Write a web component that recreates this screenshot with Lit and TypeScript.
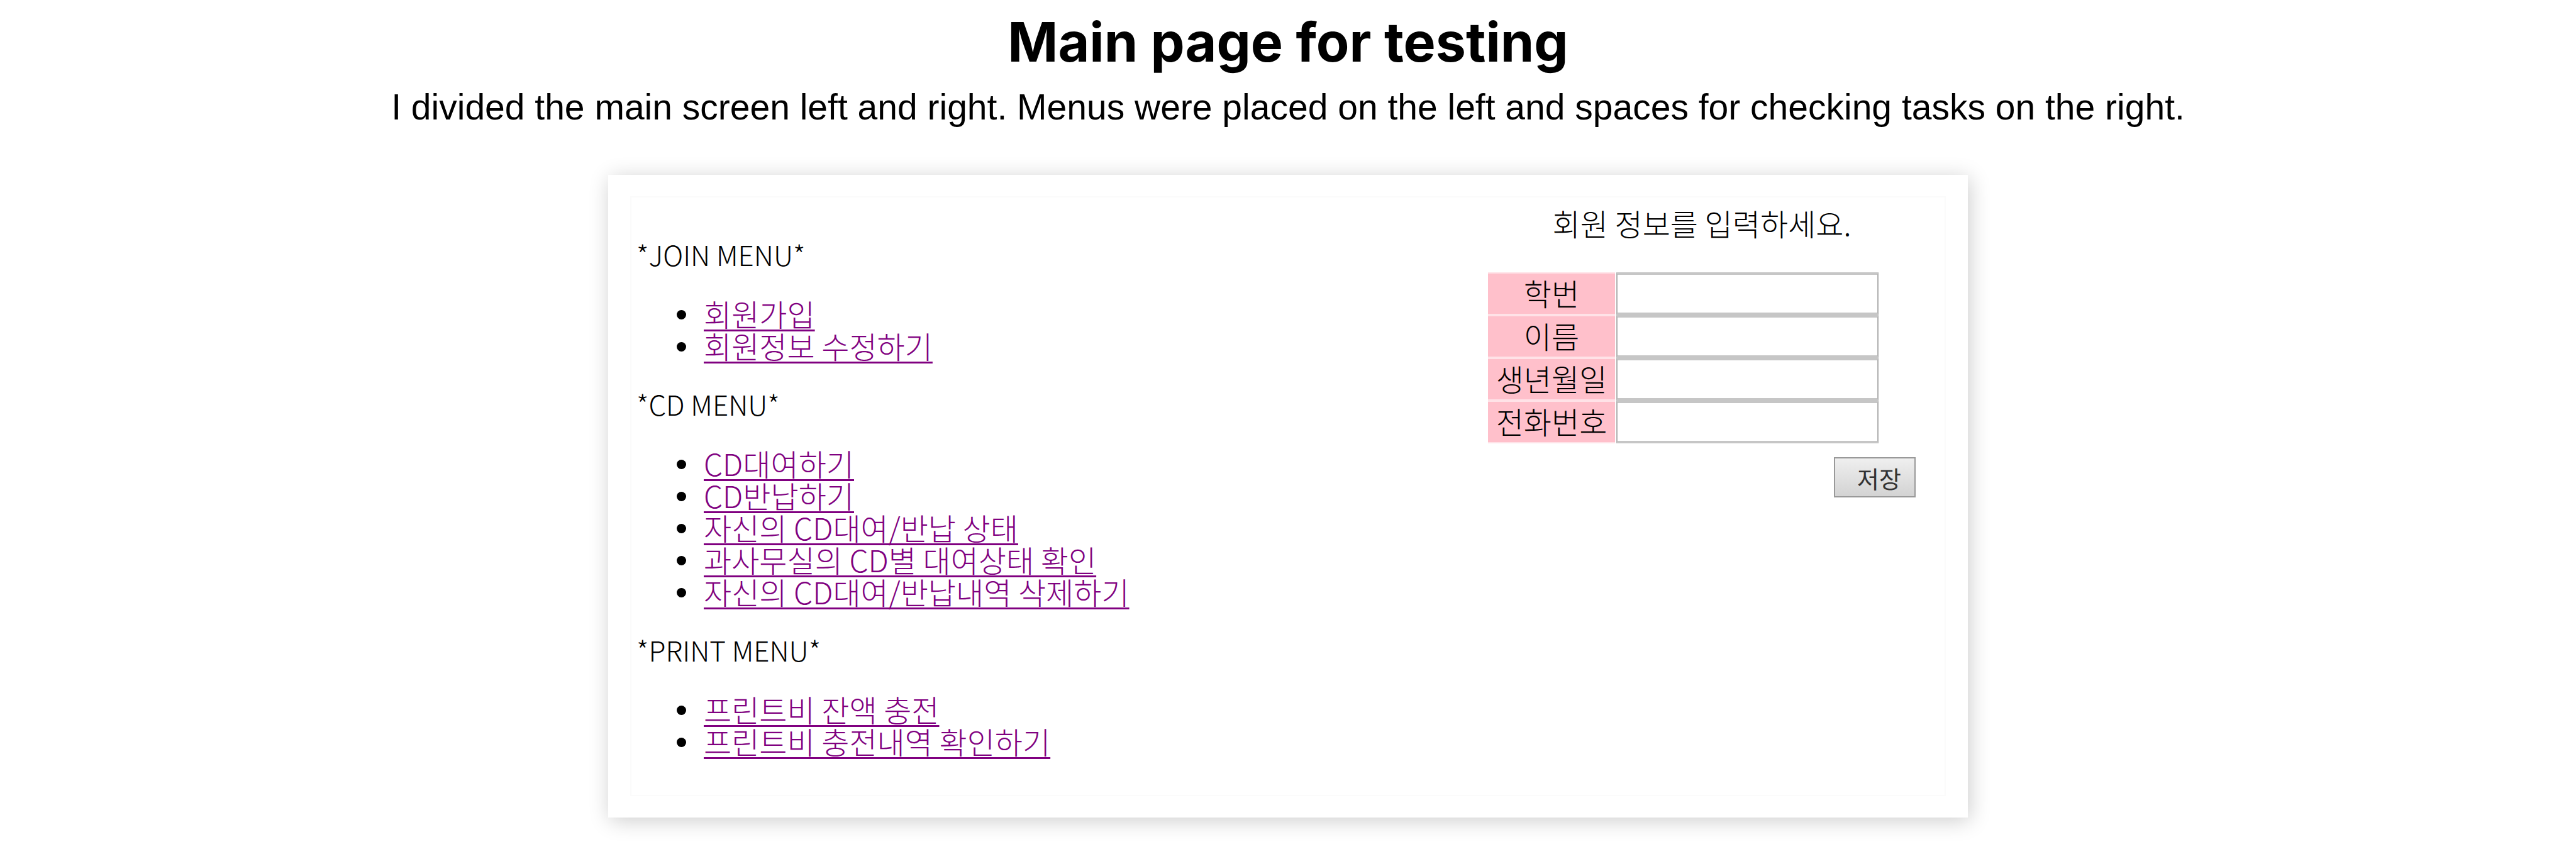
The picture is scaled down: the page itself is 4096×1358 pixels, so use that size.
import { LitElement, html, css } from "lit";
import { customElement } from "lit/decorators.js";

interface MenuGroup {
  title: string;
  items: string[];
}

const MENUS: MenuGroup[] = [
  { title: "*JOIN MENU*", items: ["회원가입", "회원정보 수정하기"] },
  {
    title: "*CD MENU*",
    items: [
      "CD대여하기",
      "CD반납하기",
      "자신의 CD대여/반납 상태",
      "과사무실의 CD별 대여상태 확인",
      "자신의 CD대여/반납내역 삭제하기",
    ],
  },
  { title: "*PRINT MENU*", items: ["프린트비 잔액 충전", "프린트비 충전내역 확인하기"] },
];

const FIELDS = [
  { id: "student-no", label: "학번" },
  { id: "name", label: "이름" },
  { id: "birth", label: "생년월일" },
  { id: "phone", label: "전화번호" },
];

@customElement("side-menu")
class SideMenu extends LitElement {
  static styles = css`
    :host {
      display: block;
    }
    .title {
      margin: 0 0 43px;
      font-size: 44px;
      line-height: 51px;
      font-weight: 300;
    }
    .list {
      margin: 0 0 42px;
      padding: 0 0 0 64px;
      list-style: none;
    }
    .list:last-child {
      margin-bottom: 0;
    }
    .item {
      display: flex;
      align-items: center;
      gap: 28px;
      line-height: 51px;
    }
    .item::before {
      content: "";
      width: 15px;
      height: 15px;
      margin-top: 4px;
      border-radius: 50%;
      background: #000;
    }
    .link {
      color: #800080;
      text-decoration: underline;
      text-decoration-thickness: 3px;
      text-decoration-skip-ink: none;
      text-underline-offset: 5px;
    }
  `;

  render() {
    return html`<nav>
      ${MENUS.map(
        (m) => html`
          <h2 class="title">${m.title}</h2>
          <ul class="list">
            ${m.items.map((t) => html`<li class="item"><a class="link" href="#">${t}</a></li>`)}
          </ul>
        `
      )}
    </nav>`;
  }
}

@customElement("member-form")
class MemberForm extends LitElement {
  static styles = css`
    :host {
      display: block;
    }
    .form {
      display: flex;
      flex-direction: column;
    }
    .heading {
      margin: 0 0 53px;
      text-align: center;
      line-height: 51px;
    }
    .fields {
      display: flex;
      flex-direction: column;
    }
    .row {
      display: flex;
      height: 68px;
      gap: 2px;
    }
    .label {
      box-sizing: border-box;
      width: 202px;
      border: 2px solid #ffe2e7;
      border-width: 2px 0;
      background: #ffc0cb;
      background-clip: padding-box;
      text-align: center;
      line-height: 60px;
    }
    .input {
      box-sizing: border-box;
      width: 417px;
      padding: 0 12px;
      border: 2px solid #b0b0b0;
      border-width: 4px 2px;
      border-top-color: #c6c6c6;
      border-bottom-color: #c6c6c6;
      border-radius: 0;
      background: #fff;
      font: inherit;
      outline: none;
    }
    .save {
      align-self: flex-end;
      margin-top: 22px;
      width: 130px;
      height: 64px;
      padding: 0 20px 0 34px;
      border: 2px solid #999;
      border-radius: 0;
      background: linear-gradient(#efefef, #d3d3d3);
      color: #333;
      font-family: inherit;
      font-weight: 400;
      font-size: 38px;
      line-height: 51px;
      white-space: nowrap;
    }
  `;

  render() {
    return html`<form class="form" @submit=${(e: Event) => e.preventDefault()}>
      <p class="heading">회원 정보를 입력하세요.</p>
      <div class="fields">
        ${FIELDS.map(
          (f) => html`<div class="row">
            <label class="label" for=${f.id}>${f.label}</label>
            <input class="input" id=${f.id} type="text" />
          </div>`
        )}
      </div>
      <button class="save" type="submit">저장</button>
    </form>`;
  }
}

@customElement("app-root")
class AppRoot extends LitElement {
  static styles = css`
    :host {
      display: block;
      background: #fff;
      color: #000;
    }
    .page {
      display: flex;
      flex-direction: column;
      align-items: center;
      padding: 16px 32px 56px;
    }
    .title {
      margin: 0;
      font-family: "Inter", sans-serif;
      font-weight: 700;
      font-size: 86px;
      line-height: 102px;
      text-align: center;
    }
    .lead {
      margin: 14px 0 70px;
      font-family: "Liberation Sans", Arial, sans-serif;
      font-size: 57px;
      line-height: 76px;
      text-align: center;
    }
    .card {
      box-sizing: border-box;
      width: 100%;
      max-width: 2162px;
      padding: 34px 35px;
      background: #fff;
      box-shadow: 3px 5px 32px rgba(0, 0, 0, 0.2);
    }
    .frame {
      display: flex;
      justify-content: space-between;
      border: 2px solid #fbfbfb;
      padding: 0 46px 60px 8px;
      font-family: "Noto Sans CJK KR", sans-serif;
      font-weight: 300;
      font-size: 48px;
    }
    .menu {
      padding-top: 65px;
    }
    .panel {
      width: 680px;
      padding-top: 15px;
    }
  `;

  render() {
    return html`<main class="page">
      <h1 class="title">Main page for testing</h1>
      <p class="lead">
        I divided the main screen left and right. Menus were placed on the left and spaces for checking tasks on the
        right.
      </p>
      <section class="card">
        <div class="frame">
          <side-menu class="menu"></side-menu>
          <member-form class="panel"></member-form>
        </div>
      </section>
    </main>`;
  }
}
